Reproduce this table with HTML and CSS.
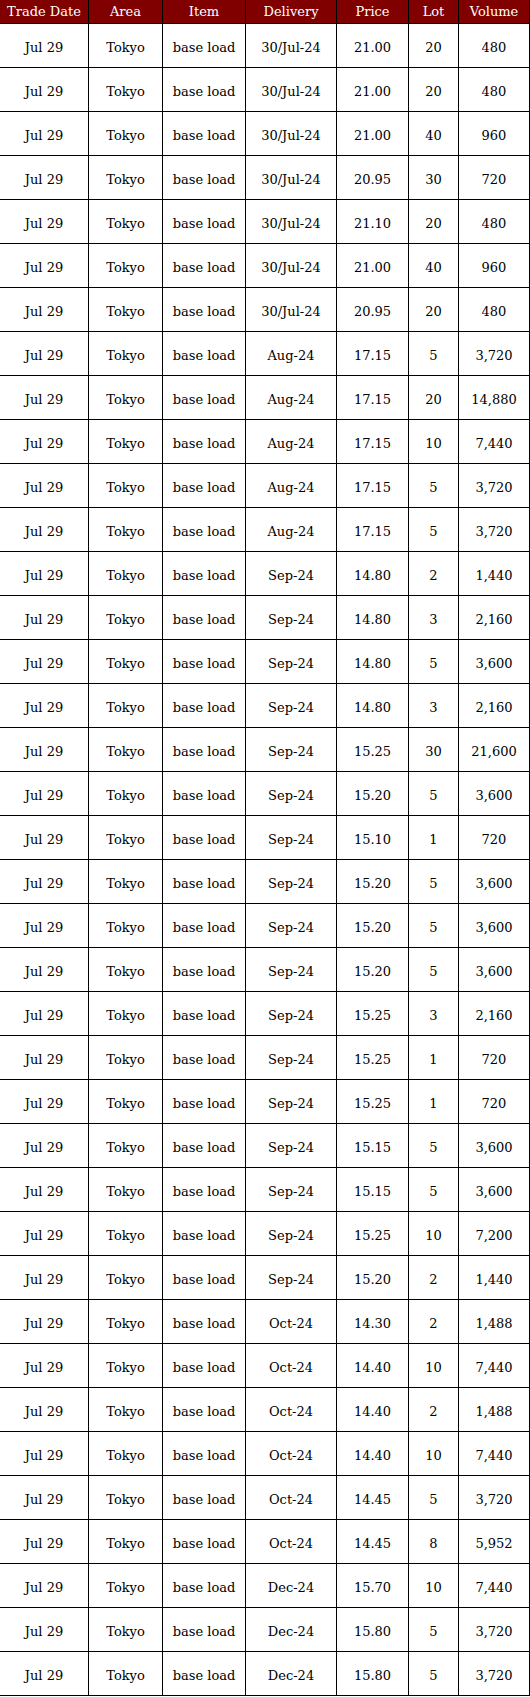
FILE: index.html
```html
<!DOCTYPE html>
<html>
<head>
<meta charset="utf-8">
<link rel="stylesheet" href="styles.css">
</head>
<body>
<table class="trades">
<colgroup>
<col class="c-date"><col class="c-area"><col class="c-item"><col class="c-del"><col class="c-price"><col class="c-lot"><col class="c-vol">
</colgroup>
<thead>
<tr><th>Trade Date</th><th>Area</th><th>Item</th><th>Delivery</th><th>Price</th><th>Lot</th><th>Volume</th></tr>
</thead>
<tbody>
<tr><td>Jul 29</td><td>Tokyo</td><td>base load</td><td>30/Jul-24</td><td>21.00</td><td>20</td><td>480</td></tr>
<tr><td>Jul 29</td><td>Tokyo</td><td>base load</td><td>30/Jul-24</td><td>21.00</td><td>20</td><td>480</td></tr>
<tr><td>Jul 29</td><td>Tokyo</td><td>base load</td><td>30/Jul-24</td><td>21.00</td><td>40</td><td>960</td></tr>
<tr><td>Jul 29</td><td>Tokyo</td><td>base load</td><td>30/Jul-24</td><td>20.95</td><td>30</td><td>720</td></tr>
<tr><td>Jul 29</td><td>Tokyo</td><td>base load</td><td>30/Jul-24</td><td>21.10</td><td>20</td><td>480</td></tr>
<tr><td>Jul 29</td><td>Tokyo</td><td>base load</td><td>30/Jul-24</td><td>21.00</td><td>40</td><td>960</td></tr>
<tr><td>Jul 29</td><td>Tokyo</td><td>base load</td><td>30/Jul-24</td><td>20.95</td><td>20</td><td>480</td></tr>
<tr><td>Jul 29</td><td>Tokyo</td><td>base load</td><td>Aug-24</td><td>17.15</td><td>5</td><td>3,720</td></tr>
<tr><td>Jul 29</td><td>Tokyo</td><td>base load</td><td>Aug-24</td><td>17.15</td><td>20</td><td>14,880</td></tr>
<tr><td>Jul 29</td><td>Tokyo</td><td>base load</td><td>Aug-24</td><td>17.15</td><td>10</td><td>7,440</td></tr>
<tr><td>Jul 29</td><td>Tokyo</td><td>base load</td><td>Aug-24</td><td>17.15</td><td>5</td><td>3,720</td></tr>
<tr><td>Jul 29</td><td>Tokyo</td><td>base load</td><td>Aug-24</td><td>17.15</td><td>5</td><td>3,720</td></tr>
<tr><td>Jul 29</td><td>Tokyo</td><td>base load</td><td>Sep-24</td><td>14.80</td><td>2</td><td>1,440</td></tr>
<tr><td>Jul 29</td><td>Tokyo</td><td>base load</td><td>Sep-24</td><td>14.80</td><td>3</td><td>2,160</td></tr>
<tr><td>Jul 29</td><td>Tokyo</td><td>base load</td><td>Sep-24</td><td>14.80</td><td>5</td><td>3,600</td></tr>
<tr><td>Jul 29</td><td>Tokyo</td><td>base load</td><td>Sep-24</td><td>14.80</td><td>3</td><td>2,160</td></tr>
<tr><td>Jul 29</td><td>Tokyo</td><td>base load</td><td>Sep-24</td><td>15.25</td><td>30</td><td>21,600</td></tr>
<tr><td>Jul 29</td><td>Tokyo</td><td>base load</td><td>Sep-24</td><td>15.20</td><td>5</td><td>3,600</td></tr>
<tr><td>Jul 29</td><td>Tokyo</td><td>base load</td><td>Sep-24</td><td>15.10</td><td>1</td><td>720</td></tr>
<tr><td>Jul 29</td><td>Tokyo</td><td>base load</td><td>Sep-24</td><td>15.20</td><td>5</td><td>3,600</td></tr>
<tr><td>Jul 29</td><td>Tokyo</td><td>base load</td><td>Sep-24</td><td>15.20</td><td>5</td><td>3,600</td></tr>
<tr><td>Jul 29</td><td>Tokyo</td><td>base load</td><td>Sep-24</td><td>15.20</td><td>5</td><td>3,600</td></tr>
<tr><td>Jul 29</td><td>Tokyo</td><td>base load</td><td>Sep-24</td><td>15.25</td><td>3</td><td>2,160</td></tr>
<tr><td>Jul 29</td><td>Tokyo</td><td>base load</td><td>Sep-24</td><td>15.25</td><td>1</td><td>720</td></tr>
<tr><td>Jul 29</td><td>Tokyo</td><td>base load</td><td>Sep-24</td><td>15.25</td><td>1</td><td>720</td></tr>
<tr><td>Jul 29</td><td>Tokyo</td><td>base load</td><td>Sep-24</td><td>15.15</td><td>5</td><td>3,600</td></tr>
<tr><td>Jul 29</td><td>Tokyo</td><td>base load</td><td>Sep-24</td><td>15.15</td><td>5</td><td>3,600</td></tr>
<tr><td>Jul 29</td><td>Tokyo</td><td>base load</td><td>Sep-24</td><td>15.25</td><td>10</td><td>7,200</td></tr>
<tr><td>Jul 29</td><td>Tokyo</td><td>base load</td><td>Sep-24</td><td>15.20</td><td>2</td><td>1,440</td></tr>
<tr><td>Jul 29</td><td>Tokyo</td><td>base load</td><td>Oct-24</td><td>14.30</td><td>2</td><td>1,488</td></tr>
<tr><td>Jul 29</td><td>Tokyo</td><td>base load</td><td>Oct-24</td><td>14.40</td><td>10</td><td>7,440</td></tr>
<tr><td>Jul 29</td><td>Tokyo</td><td>base load</td><td>Oct-24</td><td>14.40</td><td>2</td><td>1,488</td></tr>
<tr><td>Jul 29</td><td>Tokyo</td><td>base load</td><td>Oct-24</td><td>14.40</td><td>10</td><td>7,440</td></tr>
<tr><td>Jul 29</td><td>Tokyo</td><td>base load</td><td>Oct-24</td><td>14.45</td><td>5</td><td>3,720</td></tr>
<tr><td>Jul 29</td><td>Tokyo</td><td>base load</td><td>Oct-24</td><td>14.45</td><td>8</td><td>5,952</td></tr>
<tr><td>Jul 29</td><td>Tokyo</td><td>base load</td><td>Dec-24</td><td>15.70</td><td>10</td><td>7,440</td></tr>
<tr><td>Jul 29</td><td>Tokyo</td><td>base load</td><td>Dec-24</td><td>15.80</td><td>5</td><td>3,720</td></tr>
<tr><td>Jul 29</td><td>Tokyo</td><td>base load</td><td>Dec-24</td><td>15.80</td><td>5</td><td>3,720</td></tr>
</tbody>
</table>
</body>
</html>
```
FILE: styles.css
```css
html, body {
  margin: 0;
  padding: 0;
  background: #ffffff;
}

.trades {
  border-collapse: separate;
  border-spacing: 0;
  table-layout: fixed;
  width: 530px;
  font-family: "DejaVu Serif", "Liberation Serif", serif;
  font-size: 13px;
  color: #000;
}

.c-date { width: 89px; }
.c-area { width: 74px; }
.c-item { width: 83px; }
.c-del { width: 91px; }
.c-price { width: 72px; }
.c-lot { width: 50px; }
.c-vol { width: 71px; }

.trades th,
.trades td {
  box-sizing: border-box;
  padding: 0;
  text-align: center;
  vertical-align: middle;
  border-right: 1px solid #000;
  border-bottom: 1px solid #000;
  white-space: nowrap;
}

.trades th {
  height: 24px;
  background: #800000;
  color: #ffffff;
  font-weight: normal;
  line-height: 22px;
}

.trades td {
  height: 44px;
  padding-top: 3px;
}
```
